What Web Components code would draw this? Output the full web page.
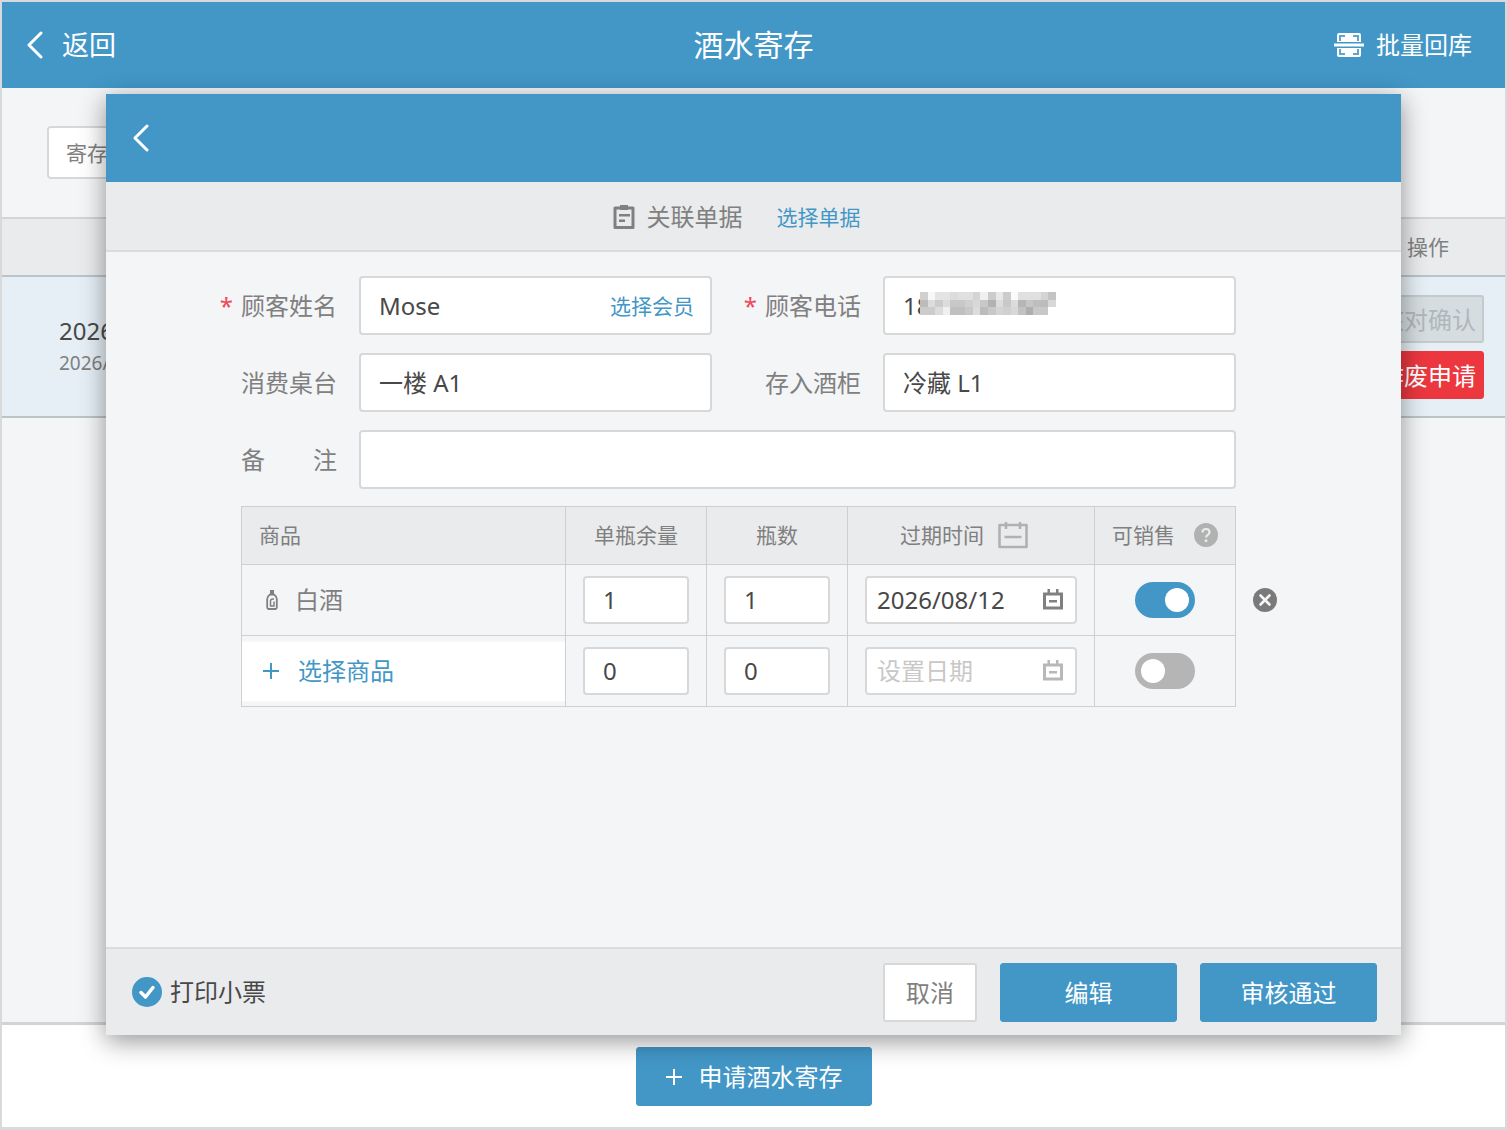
<!DOCTYPE html>
<html lang="zh-CN">
<head>
<meta charset="utf-8">
<meta name="viewport" content="width=device-width, initial-scale=1">
<title>酒水寄存</title>
<style>
  :root {
    --brand: #4297c7;
    --danger: #ec373f;
    --surface: #f4f5f7;
    --bar: #eaebed;
    --line: #d6d8d9;
    --ink: #484848;
    --muted: #808080;
  }

  * { box-sizing: border-box; }

  body {
    margin: 0;
    color: var(--ink);
    font: 24px/32px "Noto Sans", "Noto Sans CJK SC", sans-serif;
  }
</style>
</head>
<body>
<deposit-page></deposit-page>

<script>
const ICONS = {
  back: ['0 0 18 28', '<path d="M15 2 3 14l12 12" fill="none" stroke="currentColor" stroke-width="3" stroke-linecap="round" stroke-linejoin="round"/>'],
  plus: ['0 0 18 18', '<path d="M9 1v16M1 9h16" stroke="currentColor" stroke-width="2"/>'],
  scan: ['0 0 30 28', `
    <path d="M3 11V4q0-2 2-2h20q2 0 2 2v7zM3 17v7q0 2 2 2h20q2 0 2-2v-7z" fill="currentColor"/>
    <path d="M6 10V5h5M24 10V5h-5M6 18v5h5M24 18v5h-5" fill="none" stroke="#4297c7" stroke-width="2" opacity=".85"/>
    <path d="M0 12.500h30v3H0z" fill="currentColor"/>`],
  clipboard: ['0 0 22 26', `
    <path d="M2 4h18v19.500H2z" fill="none" stroke="currentColor" stroke-width="3" stroke-linejoin="round"/>
    <path d="M7 1h8v5H7zM6 10h11v2.500H6zM6 15.500h6V18H6z" fill="currentColor"/>`],
  calendar: ['0 0 22 22', `
    <path d="M2.500 5h17v14h-17z" fill="none" stroke="currentColor" stroke-width="3"/>
    <path d="M5.500 0H8v5H5.500zM14 0h2.500v5H14zM7 11h8v2.500H7z" fill="currentColor"/>`],
  calendarWide: ['0 0 30 28', `
    <path d="M1.500 4h27v22h-27zM8 1v7M22 1v7M6.500 16h17" fill="none" stroke="currentColor" stroke-width="2.600" stroke-linejoin="round"/>`],
  bottle: ['0 0 12 22', `
    <path d="M4 5.500Q1.200 7.500 1.200 10v8.500q0 1.500 1.500 1.500h6.600q1.500 0 1.500-1.500V10Q10.800 7.500 8 5.500z" fill="none" stroke="currentColor" stroke-width="1.800" stroke-linejoin="round"/>
    <path d="M4 1h4v5H4z" fill="currentColor"/>
    <path d="M8 10H7q-2.500 0-2.500 2v5H8v-4.500" fill="none" stroke="currentColor" stroke-width="1.500"/>`],
  help: ['0 0 24 24', `
    <circle cx="12" cy="12" r="12" fill="currentColor"/>
    <path d="M8.500 9.500Q8.500 6 12 6t3.500 3.200q0 1.600-1.700 2.700T12 14.500" fill="none" stroke="#eaebed" stroke-width="2.200"/>
    <path d="M10.700 16.500h2.600V19h-2.600z" fill="#eaebed"/>`],
  close: ['0 0 24 24', `
    <circle cx="12" cy="12" r="12" fill="currentColor"/>
    <path d="m7.500 7.500 9 9m0-9-9 9" stroke="#f4f5f7" stroke-width="2.600" stroke-linecap="round"/>`],
};

class UiIcon extends HTMLElement {
  connectedCallback() {
    const [box, shapes] = ICONS[this.getAttribute('name')];
    this.attachShadow({ mode: 'open' }).innerHTML = `
      <style>
        :host { display: inline-flex; flex: none; width: 22px; }
        svg { display: block; width: 100%; }
      </style>
      <svg viewBox="${box}" aria-hidden="true">${shapes}</svg>
    `;
  }
}

class UiButton extends HTMLElement {
  connectedCallback() {
    const disabled = this.hasAttribute('disabled') ? 'disabled' : '';
    this.attachShadow({ mode: 'open' }).innerHTML = `
      <style>
        :host { display: inline-flex; height: 59px; }
        button {
          display: flex;
          flex: 1;
          align-items: center;
          justify-content: center;
          gap: 16px;
          box-sizing: border-box;
          padding: 2px 6px 0;
          border: 1px solid var(--brand);
          border-radius: 3px;
          background: var(--brand);
          color: #fff;
          font: inherit;
          cursor: pointer;
          white-space: nowrap;
        }
        :host([kind="plain"]) button { border: 2px solid var(--line); background: #fff; color: var(--muted); }
        :host([kind="danger"]) button { border-color: var(--danger); background: var(--danger); }
        button:disabled { border: 2px solid #c4cbcd; background: #d5dde0; color: #b0b7ba; cursor: default; }
      </style>
      <button type="button" ${disabled}><slot></slot></button>
    `;
  }
}

class UiField extends HTMLElement {
  connectedCallback() {
    const label = this.getAttribute('label');
    const value = this.getAttribute('value') || '';
    this.attachShadow({ mode: 'open' }).innerHTML = `
      <style>
        :host { display: flex; align-items: center; min-width: 0; }
        label { position: relative; flex: none; width: 118px; color: var(--muted); white-space: pre; }
        :host([required]) label::before {
          content: '*';
          position: absolute;
          right: 100%;
          margin-right: 8px;
          color: #f0485a;
        }
        .box {
          position: relative;
          display: flex;
          flex: 1;
          align-items: center;
          box-sizing: border-box;
          min-width: 0;
          height: 59px;
          padding: 0 16px 0 18px;
          border: 2px solid var(--line);
          border-radius: 4px;
          background: #fff;
        }
        input {
          flex: 1;
          min-width: 0;
          padding: 0;
          border: 0;
          outline: 0;
          background: none;
          color: inherit;
          font: inherit;
        }
      </style>
      <label for="control">${label}</label>
      <div class="box">
        <input id="control" type="text" value="${value}">
        <slot></slot>
      </div>
    `;
  }
}

// Grey levels of the privacy mask, one row of cells per line
const MASK = [
  'd0 f8 e4 e4 dc e0 e0 d4 f0 cc e8 cc fa e0 e0 e0 d4 c4',
  'bc dc cc dc c8 c8 d0 d8 c8 b2 dc c8 dc b6 c6 be bc d8',
  'cc cc dc f0 c0 c0 c8 dc bc c8 d4 d0 d8 c2 ae c8 c8 ff',
];

class PrivacyMask extends HTMLElement {
  connectedCallback() {
    const cells = MASK.map((row, y) => row.split(' ').map((c, x) =>
      `<rect x="${x}" y="${y}" width="1" height="1" fill="#${c}${c}${c}"/>`).join('')).join('');
    this.attachShadow({ mode: 'open' }).innerHTML = `
      <style>
        :host { position: absolute; left: 35px; top: 14px; }
        svg { display: block; width: 136px; height: 23px; }
      </style>
      <svg viewBox="0 0 18 3" shape-rendering="crispEdges" aria-hidden="true">${cells}</svg>
    `;
  }
}

class UiSwitch extends HTMLElement {
  connectedCallback() {
    const checked = this.hasAttribute('checked') ? 'checked' : '';
    this.attachShadow({ mode: 'open' }).innerHTML = `
      <style>
        :host { display: inline-flex; }
        input {
          appearance: none;
          display: flex;
          align-items: center;
          box-sizing: border-box;
          width: 60px;
          height: 36px;
          margin: 0;
          padding: 0 6px;
          border-radius: 18px;
          background: #b5b5b5;
          cursor: pointer;
        }
        input::before { content: ''; width: 24px; height: 24px; border-radius: 50%; background: #fff; }
        input:checked { justify-content: flex-end; background: var(--brand); }
      </style>
      <input type="checkbox" role="switch" aria-label="${this.getAttribute('label')}" ${checked}>
    `;
  }
}

class ItemTable extends HTMLElement {
  connectedCallback() {
    this.attachShadow({ mode: 'open' }).innerHTML = `
      <style>
        :host { display: block; }
        table { width: 100%; border-collapse: collapse; table-layout: fixed; }
        .narrow { width: 141px; }
        .date { width: 247px; }
        th, td { height: 71px; box-sizing: border-box; padding: 0 17px; border: 1px solid #ccd0d1; color: var(--muted); }
        th { height: 58px; padding: 0 0 2px; background: var(--bar); font-size: 21px; font-weight: 400; }
        th:first-child { padding-left: 17px; text-align: left; }
        th div { display: flex; align-items: center; justify-content: center; gap: 14px; }
        th .expiry { padding-right: 14px; }
        th .help { gap: 19px; }
        th ui-icon { color: #b0b2b2; }
        td.name { padding: 0; }
        .product { display: flex; align-items: center; gap: 17px; padding-left: 24px; }
        .add {
          display: flex;
          align-items: center;
          gap: 18px;
          width: 100%;
          height: 59px;
          padding: 0 20px;
          border: 0;
          background: #fff;
          box-shadow: 0 0 3px #fff;
          color: var(--brand);
          font: inherit;
          cursor: pointer;
        }
        .cell {
          display: flex;
          align-items: center;
          box-sizing: border-box;
          height: 48px;
          padding: 0 18px;
          border: 2px solid var(--line);
          border-radius: 4px;
          background: #fff;
        }
        .cell.day { padding: 0 11px 0 10px; }
        .cell ui-icon { color: #808080; }
        .cell.empty ui-icon { color: #b8b8b8; }
        input {
          flex: 1;
          width: 0;
          min-width: 0;
          padding: 0;
          border: 0;
          outline: 0;
          background: none;
          color: var(--ink);
          font: inherit;
        }
        input::placeholder { color: #c8c8c8; opacity: 1; }
        .sale { position: relative; text-align: center; }
        ui-switch { vertical-align: middle; }
        .remove {
          position: absolute;
          left: calc(100% + 18px);
          top: calc(50% - 12px);
          display: flex;
          padding: 0;
          border: 0;
          background: none;
          color: #7a7a7a;
          cursor: pointer;
        }
      </style>
      <table>
        <colgroup>
          <col><col class="narrow"><col class="narrow"><col class="date"><col class="narrow">
        </colgroup>
        <thead>
          <tr>
            <th scope="col">商品</th>
            <th scope="col">单瓶余量</th>
            <th scope="col">瓶数</th>
            <th scope="col"><div class="expiry">过期时间<ui-icon name="calendarWide" style="width: 30px"></ui-icon></div></th>
            <th scope="col"><div class="help">可销售<ui-icon name="help" style="width: 24px"></ui-icon></div></th>
          </tr>
        </thead>
        <tbody>
          <tr>
            <td class="name"><div class="product"><ui-icon name="bottle" style="width: 12px"></ui-icon>白酒</div></td>
            <td><div class="cell"><input type="text" aria-label="单瓶余量" value="1"></div></td>
            <td><div class="cell"><input type="text" aria-label="瓶数" value="1"></div></td>
            <td><div class="cell day"><input type="text" aria-label="过期时间" value="2026/08/12"><ui-icon name="calendar"></ui-icon></div></td>
            <td class="sale">
              <ui-switch label="可销售" checked></ui-switch>
              <button class="remove" type="button" aria-label="删除"><ui-icon name="close" style="width: 24px"></ui-icon></button>
            </td>
          </tr>
          <tr>
            <td class="name"><button class="add" type="button"><ui-icon name="plus" style="width: 18px"></ui-icon>选择商品</button></td>
            <td><div class="cell"><input type="text" aria-label="单瓶余量" value="0"></div></td>
            <td><div class="cell"><input type="text" aria-label="瓶数" value="0"></div></td>
            <td><div class="cell day empty"><input type="text" aria-label="过期时间" placeholder="设置日期"><ui-icon name="calendar"></ui-icon></div></td>
            <td class="sale"><ui-switch label="可销售"></ui-switch></td>
          </tr>
        </tbody>
      </table>
    `;
  }
}

class DepositDialog extends HTMLElement {
  connectedCallback() {
    this.attachShadow({ mode: 'open' }).innerHTML = `
      <style>
        :host {
          display: flex;
          flex-direction: column;
          flex: 1;
          min-width: 0;
          background: var(--surface);
          box-shadow: 0 6px 24px rgba(0, 0, 0, .42);
        }
        header { display: flex; align-items: center; height: 88px; padding: 0 26px; background: var(--brand); }
        header button { display: flex; padding: 0; border: 0; background: none; color: #fff; cursor: pointer; }
        .linked {
          display: flex;
          align-items: center;
          justify-content: center;
          box-sizing: border-box;
          height: 70px;
          padding: 2px 34px 0 0;
          border-bottom: 2px solid #dbdcde;
          background: var(--bar);
          color: var(--muted);
        }
        .linked ui-icon { margin-right: 12px; }
        a { color: var(--brand); font-size: 21px; text-decoration: none; white-space: nowrap; }
        .linked a { margin-left: 34px; }
        form { flex: 1; padding: 24px 165px 0 135px; }
        .fields { display: grid; grid-template-columns: 1fr 1fr; gap: 18px 53px; margin-bottom: 17px; }
        .wide { grid-column: 1 / -1; }
        footer {
          display: flex;
          align-items: center;
          gap: 23px;
          box-sizing: border-box;
          height: 88px;
          padding: 0 24px 0 26px;
          border-top: 2px solid #dbdcde;
          background: var(--bar);
        }
        footer label { display: flex; align-items: center; gap: 8px; margin-right: auto; }
        footer input {
          appearance: none;
          width: 30px;
          height: 30px;
          margin: 0;
          border-radius: 50%;
          background: #b5b5b5;
        }
        footer input:checked {
          background: var(--brand) url("data:image/svg+xml,%3Csvg xmlns='http://www.w3.org/2000/svg' viewBox='0 0 30 30'%3E%3Cpath d='m9 15.500 4.500 4.500L21 10.500' fill='none' stroke='white' stroke-width='3.500' stroke-linecap='round' stroke-linejoin='round'/%3E%3C/svg%3E");
        }
        .small { width: 94px; }
        .large { width: 177px; }
      </style>
      <header>
        <button type="button" aria-label="返回"><ui-icon name="back" style="width: 18px"></ui-icon></button>
      </header>
      <div class="linked">
        <ui-icon name="clipboard"></ui-icon>关联单据
        <a href="#orders">选择单据</a>
      </div>
      <form>
        <div class="fields">
          <ui-field label="顾客姓名" value="Mose" required><a href="#members">选择会员</a></ui-field>
          <ui-field label="顾客电话" value="18" required><privacy-mask></privacy-mask></ui-field>
          <ui-field label="消费桌台" value="一楼 A1"></ui-field>
          <ui-field label="存入酒柜" value="冷藏 L1"></ui-field>
          <ui-field class="wide" label="备　　注"></ui-field>
        </div>
        <item-table></item-table>
      </form>
      <footer>
        <label><input type="checkbox" checked>打印小票</label>
        <ui-button class="small" kind="plain">取消</ui-button>
        <ui-button class="large">编辑</ui-button>
        <ui-button class="large">审核通过</ui-button>
      </footer>
    `;
  }
}

class DepositList extends HTMLElement {
  connectedCallback() {
    this.attachShadow({ mode: 'open' }).innerHTML = `
      <style>
        :host { display: block; flex: 1; }
        .filters { display: flex; align-items: center; height: 129px; padding: 0 45px; box-sizing: border-box; }
        select {
          appearance: none;
          width: 180px;
          height: 53px;
          padding: 0 17px;
          border: 2px solid var(--line);
          border-radius: 4px;
          background: #fff;
          color: var(--muted);
          font: inherit;
          font-size: 21px;
        }
        table { width: 100%; border-collapse: collapse; }
        th, td { padding: 0 21px 0 57px; font-weight: 400; text-align: left; }
        th { height: 56px; border-top: 2px solid #d2d4d5; background: var(--bar); color: var(--muted); font-size: 21px; }
        td { height: 139px; border: solid #bcc4c8; border-width: 2px 0; background: #e6eff6; }
        small { display: block; color: var(--muted); font-size: 19px; }
        .actions { width: 112px; padding-left: 0; text-align: center; }
        .actions ui-button { display: flex; height: 48px; }
        .actions ui-button + ui-button { margin-top: 8px; }
      </style>
      <div class="filters">
        <select aria-label="筛选"><option>寄存时间</option></select>
      </div>
      <table>
        <thead>
          <tr><th scope="col"></th><th class="actions" scope="col">操作</th></tr>
        </thead>
        <tbody>
          <tr>
            <td>2026<small>2026/</small></td>
            <td class="actions">
              <ui-button disabled>核对确认</ui-button>
              <ui-button kind="danger">作废申请</ui-button>
            </td>
          </tr>
        </tbody>
      </table>
    `;
  }
}

class DepositPage extends HTMLElement {
  connectedCallback() {
    this.attachShadow({ mode: 'open' }).innerHTML = `
      <style>
        :host {
          position: relative;
          display: flex;
          flex-direction: column;
          box-sizing: border-box;
          min-height: 100vh;
          border: solid #d8d9da;
          border-width: 2px 2px 3px 2px;
          background: var(--surface);
        }
        header {
          display: grid;
          grid-template-columns: 1fr auto 1fr;
          align-items: center;
          height: 86px;
          padding: 0 24px;
          background: var(--brand);
          color: #fff;
        }
        header button {
          display: flex;
          align-items: center;
          gap: 18px;
          justify-self: start;
          padding: 0;
          border: 0;
          background: none;
          color: inherit;
          font: inherit;
          font-size: 27px;
          cursor: pointer;
        }
        header .batch { gap: 12px; justify-self: end; padding-right: 9px; font-size: 24px; }
        h1 { margin: 0; font-size: 30px; font-weight: 400; }
        footer {
          display: flex;
          align-items: center;
          justify-content: center;
          box-sizing: border-box;
          height: 105px;
          border-top: 3px solid #d2d3d5;
          background: #fff;
        }
        footer ui-button { width: 236px; }
        .overlay { position: absolute; inset: 0; display: flex; padding: 92px 104px; }
      </style>
      <header>
        <button type="button"><ui-icon name="back" style="width: 18px"></ui-icon>返回</button>
        <h1>酒水寄存</h1>
        <button class="batch" type="button"><ui-icon name="scan" style="width: 30px"></ui-icon>批量回库</button>
      </header>
      <deposit-list></deposit-list>
      <footer>
        <ui-button><ui-icon name="plus" style="width: 18px"></ui-icon>申请酒水寄存</ui-button>
      </footer>
      <div class="overlay">
        <deposit-dialog role="dialog" aria-label="酒水寄存"></deposit-dialog>
      </div>
    `;
  }
}

customElements.define('ui-icon', UiIcon);
customElements.define('ui-button', UiButton);
customElements.define('ui-field', UiField);
customElements.define('ui-switch', UiSwitch);
customElements.define('privacy-mask', PrivacyMask);
customElements.define('item-table', ItemTable);
customElements.define('deposit-dialog', DepositDialog);
customElements.define('deposit-list', DepositList);
customElements.define('deposit-page', DepositPage);
</script>
</body>
</html>
